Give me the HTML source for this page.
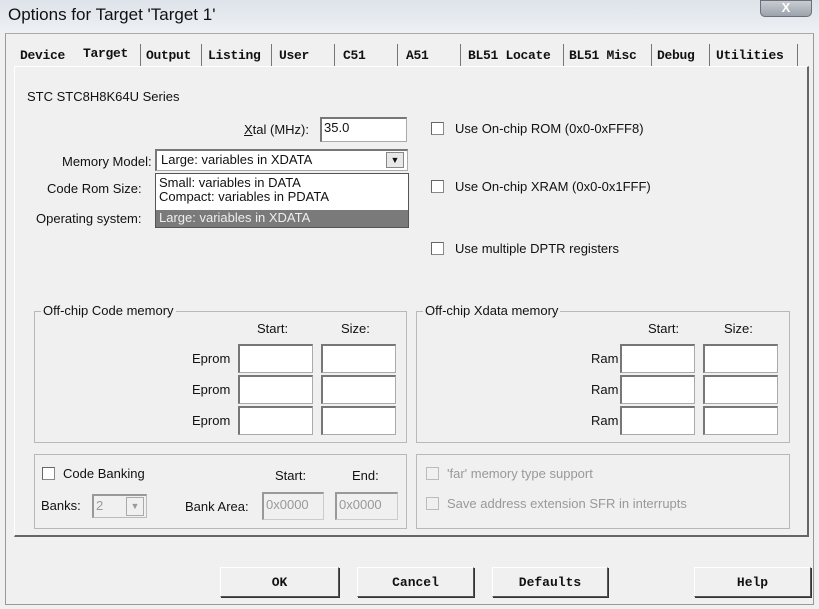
<!DOCTYPE html>
<html><head><meta charset="utf-8"><style>
*{box-sizing:border-box;margin:0;padding:0}
body{width:819px;height:609px;overflow:hidden;background:#f0f0f0;font-family:"Liberation Sans Narrow","Liberation Sans",sans-serif;font-size:13px;color:#111;position:relative}
.a{position:absolute;white-space:nowrap}
.title{left:0;top:0;width:819px;height:33px;background:linear-gradient(#dde3ea,#eef1f4)}
.in{position:absolute;background:#fff;border:1px solid #aaa;border-top:2px solid #777;border-left:2px solid #777}
.cb{position:absolute;width:13px;height:13px;background:#fff;border:1px solid #888;border-top-color:#666;border-left-color:#666}
.grp{position:absolute;border:1px solid #b8b8b8}
.btn{position:absolute;height:30px;border:1px solid #555;border-top-color:#fff;border-left-color:#fff;box-shadow:1px 1px 0 #333;background:#f0f0f0;font-family:"Liberation Mono",monospace;font-weight:bold;font-size:13px;display:flex;align-items:center;justify-content:center}
.tab{position:absolute;top:48px;font-family:"Liberation Mono",monospace;font-weight:bold;font-size:13px;letter-spacing:-0.3px}
.sep{position:absolute;top:44px;width:1px;height:22px;background:#777}
.dis{color:#999}
</style></head><body>
<div class="a title"></div>
<div class="a" style="left:8px;top:5px;font-size:17px">Options for Target 'Target 1'</div>
<div class="a" style="left:760px;top:0;width:52px;height:17px;background:linear-gradient(#c8ccd2,#9ca3ac);border:1px solid #6a7078;border-radius:0 0 5px 5px;color:#fff;font-weight:bold;text-align:center;font-size:13px;line-height:14px">X</div>
<div class="a" style="left:5px;top:33px;width:809px;height:572px;border:1px solid #999;border-top-color:#aaa"></div>
<!-- tabs -->
<div class="tab" style="left:20px">Device</div>
<div class="tab" style="left:83px;top:46px">Target</div>
<div class="sep" style="left:140px"></div>
<div class="tab" style="left:146px">Output</div><div class="sep" style="left:201px"></div>
<div class="tab" style="left:208px">Listing</div><div class="sep" style="left:271px"></div>
<div class="tab" style="left:279px">User</div><div class="sep" style="left:334px"></div>
<div class="tab" style="left:343px">C51</div><div class="sep" style="left:397px"></div>
<div class="tab" style="left:406px">A51</div><div class="sep" style="left:460px"></div>
<div class="tab" style="left:468px">BL51 Locate</div><div class="sep" style="left:563px"></div>
<div class="tab" style="left:569px">BL51 Misc</div><div class="sep" style="left:651px"></div>
<div class="tab" style="left:657px">Debug</div><div class="sep" style="left:709px"></div>
<div class="tab" style="left:716px">Utilities</div><div class="sep" style="left:797px"></div>
<div class="a" style="left:14px;top:66px;width:795px;height:471px;border:1px solid #888;border-top-color:#fff;border-left-color:#fff;border-right:2px solid #666;border-bottom:2px solid #666"></div>
<div class="a" style="left:27px;top:89px">STC STC8H8K64U Series</div>
<div class="a" style="left:244px;top:122px"><u>X</u>tal (MHz):</div>
<div class="in" style="left:320px;top:117px;width:87px;height:25px;padding:1px 2px">35.0</div>
<div class="cb" style="left:431px;top:122px"></div><div class="a" style="left:455px;top:121px">Use On-chip ROM (0x0-0xFFF8)</div>
<div class="a" style="left:62px;top:154px">Memory Model:</div>
<div class="in" style="left:155px;top:149px;width:253px;height:22px;padding:1px 4px">Large: variables in XDATA</div>
<div class="a" style="left:386px;top:152px;width:18px;height:16px;background:#e8e8e8;border:1px solid #888;text-align:center;font-size:9px;line-height:14px">▼</div>
<div class="a" style="left:47px;top:181px">Code Rom Size:</div>
<div class="a" style="left:36px;top:211px">Operating system:</div>
<div class="a" style="left:155px;top:173px;width:254px;height:55px;background:#fff;border:1px solid #555"></div>
<div class="a" style="left:159px;top:176px;line-height:14px">Small: variables in DATA<br>Compact: variables in PDATA</div>
<div class="a" style="left:156px;top:210px;width:252px;height:17px;background:#7a7a7a;color:#eee;padding-left:3px;line-height:16px">Large: variables in XDATA</div>
<div class="cb" style="left:431px;top:180px"></div><div class="a" style="left:455px;top:179px">Use On-chip XRAM (0x0-0x1FFF)</div>
<div class="cb" style="left:431px;top:242px"></div><div class="a" style="left:455px;top:241px">Use multiple DPTR registers</div>
<!-- groups -->
<div class="grp" style="left:34px;top:311px;width:373px;height:132px"></div>
<div class="a" style="left:41px;top:303px;background:#f0f0f0;padding:0 2px">Off-chip Code memory</div>
<div class="a" style="left:257px;top:321px">Start:</div><div class="a" style="left:341px;top:321px">Size:</div>
<div class="grp" style="left:416px;top:311px;width:374px;height:132px"></div>
<div class="a" style="left:423px;top:303px;background:#f0f0f0;padding:0 2px">Off-chip Xdata memory</div>
<div class="a" style="left:648px;top:321px">Start:</div><div class="a" style="left:724px;top:321px">Size:</div>
<div class="a" style="left:192px;top:351px">Eprom</div><div class="a" style="left:192px;top:382px">Eprom</div><div class="a" style="left:192px;top:413px">Eprom</div>
<div class="in" style="left:238px;top:344px;width:75px;height:29px"></div><div class="in" style="left:321px;top:344px;width:75px;height:29px"></div>
<div class="in" style="left:238px;top:375px;width:75px;height:29px"></div><div class="in" style="left:321px;top:375px;width:75px;height:29px"></div>
<div class="in" style="left:238px;top:406px;width:75px;height:29px"></div><div class="in" style="left:321px;top:406px;width:75px;height:29px"></div>
<div class="a" style="left:591px;top:351px">Ram</div><div class="a" style="left:591px;top:382px">Ram</div><div class="a" style="left:591px;top:413px">Ram</div>
<div class="in" style="left:620px;top:344px;width:75px;height:29px"></div><div class="in" style="left:703px;top:344px;width:75px;height:29px"></div>
<div class="in" style="left:620px;top:375px;width:75px;height:29px"></div><div class="in" style="left:703px;top:375px;width:75px;height:29px"></div>
<div class="in" style="left:620px;top:406px;width:75px;height:29px"></div><div class="in" style="left:703px;top:406px;width:75px;height:29px"></div>
<div class="grp" style="left:34px;top:454px;width:373px;height:75px"></div>
<div class="cb" style="left:42px;top:467px"></div><div class="a" style="left:63px;top:466px">Code Banking</div>
<div class="a" style="left:275px;top:468px">Start:</div><div class="a" style="left:352px;top:468px">End:</div>
<div class="a" style="left:41px;top:498px">Banks:</div>
<div class="a dis" style="left:92px;top:494px;width:55px;height:24px;border:1px solid #bbb;border-top:2px solid #999;border-left:2px solid #999;padding:2px 2px">2</div>
<div class="a" style="left:126px;top:497px;width:18px;height:19px;border:1px solid #aaa;color:#999;font-size:9px;text-align:center;line-height:17px">▼</div>
<div class="a" style="left:185px;top:499px">Bank Area:</div>
<div class="a dis" style="left:262px;top:492px;width:62px;height:28px;border:1px solid #ccc;border-top:2px solid #999;border-left:2px solid #999;padding:3px 2px">0x0000</div>
<div class="a dis" style="left:335px;top:492px;width:63px;height:28px;border:1px solid #ccc;border-top:2px solid #999;border-left:2px solid #999;padding:3px 2px">0x0000</div>
<div class="grp" style="left:416px;top:454px;width:374px;height:75px"></div>
<div class="cb" style="left:426px;top:467px;border-color:#bbb;background:#f0f0f0"></div><div class="a dis" style="left:447px;top:466px">'far' memory type support</div>
<div class="cb" style="left:426px;top:497px;border-color:#bbb;background:#f0f0f0"></div><div class="a dis" style="left:447px;top:496px">Save address extension SFR in interrupts</div>
<div class="btn" style="left:220px;top:567px;width:119px">OK</div>
<div class="btn" style="left:357px;top:567px;width:117px">Cancel</div>
<div class="btn" style="left:492px;top:567px;width:116px">Defaults</div>
<div class="btn" style="left:694px;top:567px;width:117px">Help</div>
</body></html>
